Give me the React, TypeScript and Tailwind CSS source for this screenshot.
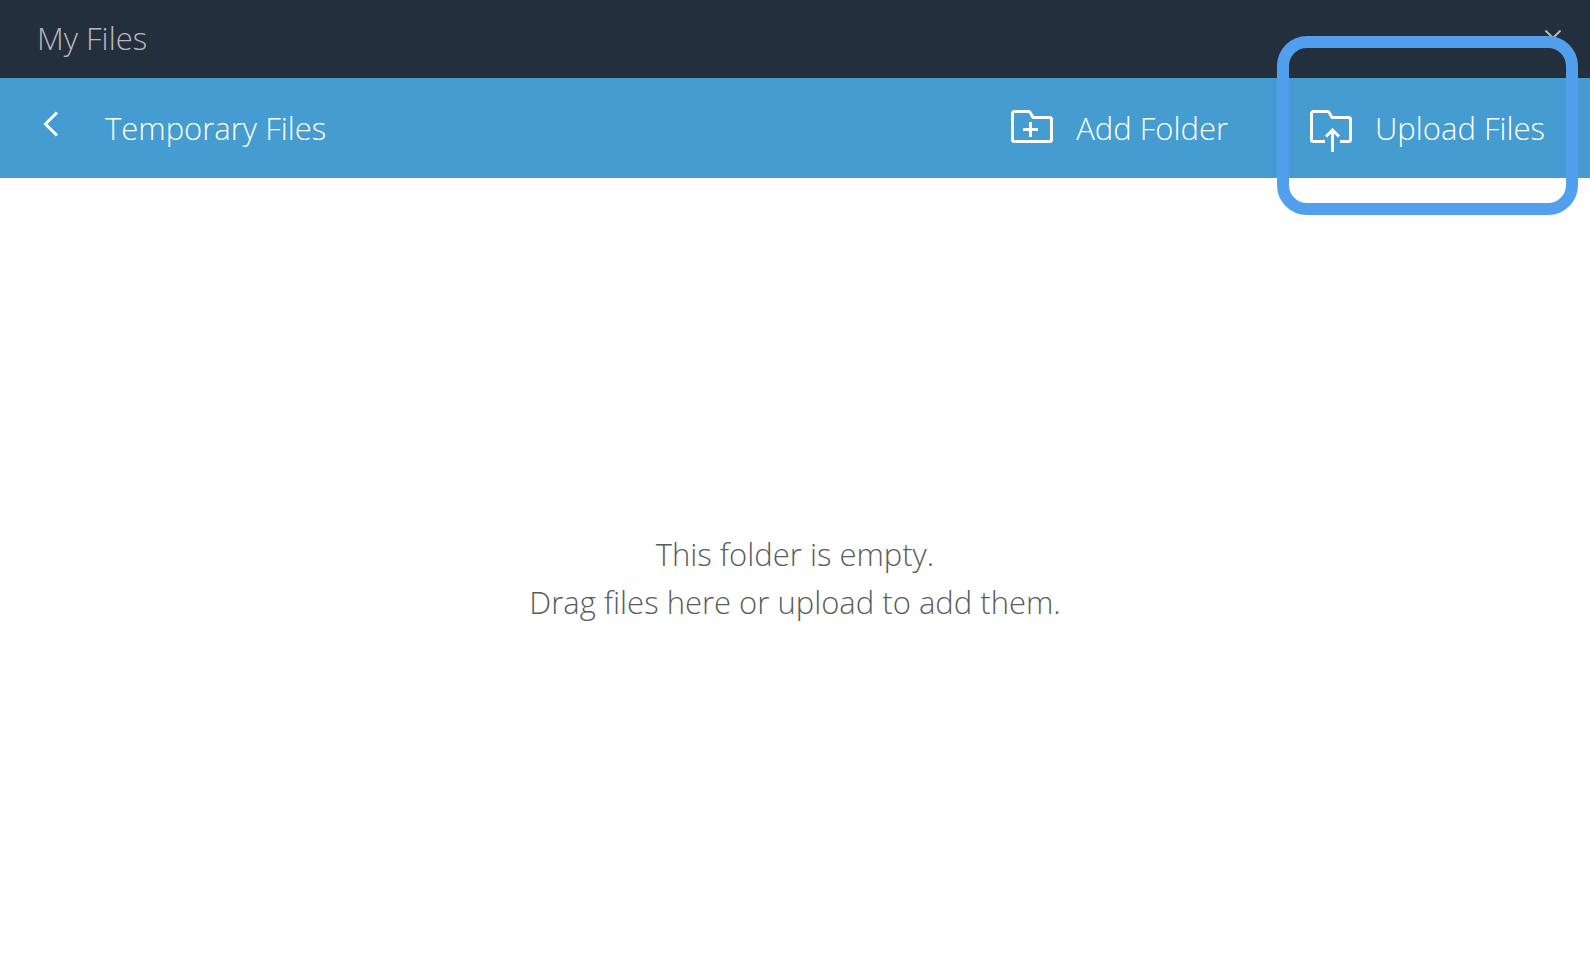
import type { ReactNode } from "react";

const labelText = "text-[31px] font-light leading-[48px] whitespace-nowrap";

function ChevronLeftIcon() {
  return (
    <svg className="h-[26px] w-4" viewBox="0 0 16 26" fill="none" stroke="currentColor" strokeWidth="3" aria-hidden="true">
      <path d="M14 1.5 2.5 13 14 24.5" />
    </svg>
  );
}

function CloseIcon() {
  return (
    <svg className="h-4 w-4" viewBox="0 0 16 16" fill="none" stroke="currentColor" strokeWidth="2" aria-hidden="true">
      <path d="M.5.5l15 15M15.5.5l-15 15" />
    </svg>
  );
}

function FolderIcon({ children }: { children: ReactNode }) {
  return (
    <svg
      className="h-12 w-[42px] shrink-0"
      viewBox="0 -6 42 48"
      fill="none"
      stroke="currentColor"
      strokeWidth="3"
      aria-hidden="true"
    >
      {children}
    </svg>
  );
}

function AddFolderIcon() {
  return (
    <FolderIcon>
      <path d="M3.5 1.5H17.5a2 2 0 0 1 1.8 1.1L22 7.5H38.5a2 2 0 0 1 2 2V29.5a2 2 0 0 1-2 2H3.5a2 2 0 0 1-2-2V3.5a2 2 0 0 1 2-2Z" />
      <path d="M19.5 12v15M12 19.5h15" />
    </FolderIcon>
  );
}

function UploadFilesIcon() {
  return (
    <FolderIcon>
      <path d="M15 31.5H3.5a2 2 0 0 1-2-2V3.5a2 2 0 0 1 2-2H17.5a2 2 0 0 1 1.8 1.1L22 7.5H38.5a2 2 0 0 1 2 2V29.5a2 2 0 0 1-2 2H30" />
      <path d="M22.5 42V20M16 26.5l6.5-6.5 6.5 6.5" />
    </FolderIcon>
  );
}

export default function App() {
  return (
    <div className="flex min-h-screen flex-col overflow-x-hidden bg-white font-['Open_Sans','Noto_Sans',sans-serif]">
      {/* Window title */}
      <header className="flex h-[78px] items-center justify-between bg-[#242f3d] pr-[29px] pb-[2px] pl-[37px] text-[#b9b9b9]">
        <h1 className={labelText}>My Files</h1>
        <button type="button" aria-label="Close">
          <CloseIcon />
        </button>
      </header>

      {/* Folder toolbar */}
      <nav className="flex h-[100px] items-center justify-between bg-[#449cd1] pr-[45px] pl-[43px] text-white">
        <div className="flex items-center gap-[46px]">
          <button type="button" aria-label="Back" className="pb-2">
            <ChevronLeftIcon />
          </button>
          <h2 className={labelText}>Temporary Files</h2>
        </div>

        <div className="flex h-full items-center gap-[82px]">
          <button type="button" className="flex h-full items-center gap-[23px]">
            <AddFolderIcon />
            <span className={labelText}>Add Folder</span>
          </button>
          <div className="relative h-full">
            <button type="button" className="flex h-full items-center gap-[23px]">
              <UploadFilesIcon />
              <span className={labelText}>Upload Files</span>
            </button>
            {/* Highlight around the upload action */}
            <div className="pointer-events-none absolute -top-[42px] -right-[33px] -bottom-[37px] -left-[33px] rounded-[30px] border-12 border-[#529fee]" />
          </div>
        </div>
      </nav>

      {/* Drop area */}
      <main className="flex flex-1 flex-col items-center justify-center pt-1 text-center text-[31px] font-light leading-[48px] text-[#5c5c5c]">
        <p>This folder is empty.</p>
        <p>Drag files here or upload to add them.</p>
      </main>
    </div>
  );
}
